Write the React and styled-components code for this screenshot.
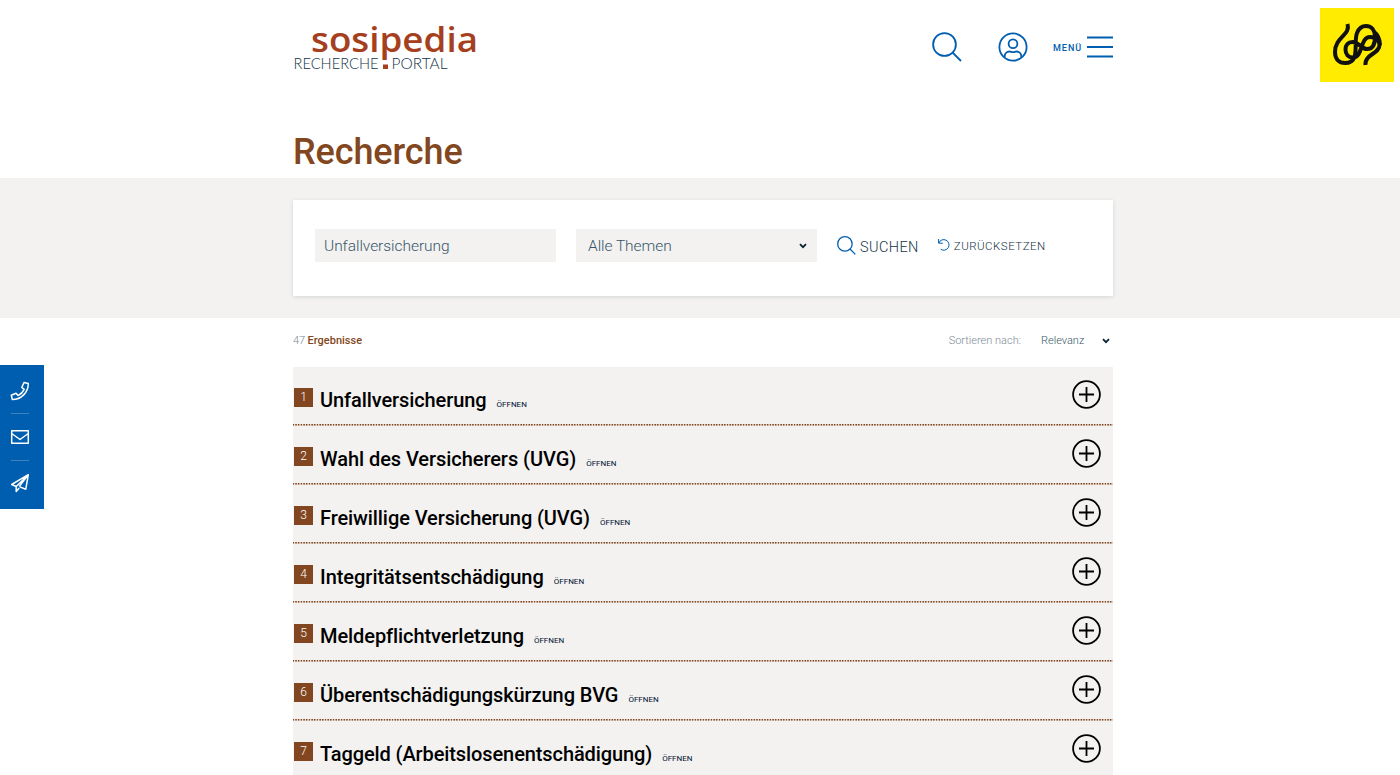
import React from 'react'
import styled, { createGlobalStyle } from 'styled-components'

const GlobalStyle = createGlobalStyle`
  * {
    box-sizing: border-box;
  }
  body {
    margin: 0;
    height: 775px;
    overflow: hidden;
    background: #fff;
    color: #143345;
    font-family: Roboto, 'Liberation Sans', sans-serif;
  }
`

const Page = styled.div`
  height: 775px;
  overflow: hidden;
`

const Container = styled.div`
  width: 820px;
  margin-left: 293px;
`

const Header = styled.header`
  display: flex;
  justify-content: space-between;
  height: 130px;
  padding-top: 16px;
`

const Logo = styled.svg`
  display: block;
  width: 190px;
  height: 62px;
  overflow: visible;
`

const Nav = styled.nav`
  display: flex;
  align-items: center;
  height: 61px;
  color: #005eb0;
  svg {
    display: block;
    fill: none;
    stroke: currentColor;
  }
`

const NavItem = styled.a`
  display: flex;
  margin-left: ${({ $gap }) => $gap}px;
`

const MenuLabel = styled.span`
  margin: 2px 0 0 25px;
  width: 34px;
  font-size: 9px;
  font-weight: 500;
  letter-spacing: 1px;
`

const Title = styled.h1`
  margin: 0;
  height: 47.5px;
  font-size: 36px;
  line-height: 44px;
  font-weight: 500;
  letter-spacing: -0.1px;
  color: #824720;
`

const SearchBand = styled.section`
  height: 140.5px;
  padding-top: 22px;
  background: #f3f2f0;
`

const SearchForm = styled.div`
  display: flex;
  align-items: center;
  width: 820px;
  height: 96px;
  margin-left: 293px;
  padding: 0 22px 5px;
  background: #fff;
  box-shadow: 0 1px 4px rgba(20, 51, 69, 0.14);
`

const Field = styled.div`
  display: flex;
  align-items: center;
  justify-content: space-between;
  width: 241px;
  height: 33px;
  margin-right: 20px;
  padding: 1px 10px 0 ${({ $indent }) => $indent}px;
  background: #f3f2f0;
  font-size: 15.5px;
  font-weight: 300;
  letter-spacing: -0.05px;
  color: #36566a;
`

const FormButton = styled.a`
  display: flex;
  align-items: center;
  margin-right: 19px;
  font-size: ${({ $size }) => $size}px;
  font-weight: 300;
  letter-spacing: ${({ $spacing }) => $spacing}px;
  white-space: nowrap;
  svg {
    display: block;
    flex: none;
    fill: none;
    stroke: #005eb0;
  }
`

const ButtonText = styled.span`
  margin: ${({ $top }) => $top}px 0 0 4px;
`

const Meta = styled.div`
  display: flex;
  align-items: center;
  height: 49px;
  padding-bottom: 4px;
  font-size: 11px;
  font-weight: 300;
  color: #7c8a94;
`

const Count = styled.div`
  flex: 1;
  letter-spacing: -0.1px;
  strong {
    font-weight: 500;
    letter-spacing: 0;
    color: #824720;
  }
`

const SortValue = styled.span`
  display: flex;
  align-items: center;
  justify-content: space-between;
  width: 69px;
  margin: 0 3px 0 20px;
  color: #36566a;
`

const Row = styled.article`
  display: flex;
  height: 58.93px;
  padding: 0 12px 0 1px;
  background:
    repeating-linear-gradient(90deg, #824720 0, #824720 0.7px, #e3d8d0 1.4px, #e3d8d0 2px, #824720 2.68px) 0 100% / 100% 1.6px no-repeat,
    #f3f2f0;
`

const Badge = styled.span`
  width: 19px;
  height: 19px;
  margin: 21px 7px 0 0;
  background: #824720;
  color: #fff;
  font-size: 12px;
  font-weight: 300;
  line-height: 19px;
  text-align: center;
`

const RowTitle = styled.h2`
  margin: 0;
  font-size: 20px;
  line-height: 66px;
  font-weight: 500;
  letter-spacing: ${({ $spacing }) => $spacing}px;
  color: #000;
  white-space: nowrap;
`

const Open = styled.span`
  flex: 1;
  margin-left: 10px;
  font-size: 8px;
  line-height: 76px;
  color: #001030;
`

const Plus = styled.svg`
  width: 29px;
  height: 29px;
  margin-top: 13px;
  fill: none;
  stroke: #000;
  stroke-width: 1.8;
`

const Partner = styled.div`
  position: absolute;
  top: 8px;
  left: 1320px;
  width: 74px;
  height: 74px;
  background: #ffec00;
`

const ContactBar = styled.aside`
  position: absolute;
  top: 365px;
  left: 0;
  display: flex;
  flex-direction: column;
  align-items: center;
  width: 43.5px;
  height: 144px;
  padding: 3px 4px 3px 0;
  background: #005eb0;
`

const Contact = styled.a`
  display: flex;
  flex: 1;
  align-items: center;
  justify-content: center;
  width: 18px;
  & + & {
    border-top: 1px solid #3e83c0;
  }
  svg {
    flex: none;
    width: 20px;
    height: 20px;
    fill: none;
    stroke: #fff;
    stroke-width: 1.5;
    stroke-linejoin: round;
  }
`

const Magnifier = ({ size, width }) => (
  <svg width={size} height={size} viewBox="0 0 30 30" strokeWidth={width}>
    <circle cx="12.5" cy="12.5" r="11.4" />
    <path d="M20.5 20.5 29 29" />
  </svg>
)

const Chevron = () => (
  <svg width="8" height="6" viewBox="0 0 8 6" fill="none" stroke="#0b2233" strokeWidth="1.8">
    <path d="M1 1.2 4 4.2 7 1.2" />
  </svg>
)

const results = [
  { title: 'Unfallversicherung', spacing: -0.09 },
  { title: 'Wahl des Versicherers (UVG)', spacing: -0.06 },
  { title: 'Freiwillige Versicherung (UVG)', spacing: -0.09 },
  { title: 'Integritätsentschädigung', spacing: -0.03 },
  { title: 'Meldepflichtverletzung', spacing: -0.08 },
  { title: 'Überentschädigungskürzung BVG', spacing: -0.08 },
  { title: 'Taggeld (Arbeitslosenentschädigung)', spacing: -0.1 },
]

const ResultRow = ({ number, title, spacing }) => (
  <Row>
    <Badge>{number}</Badge>
    <RowTitle $spacing={spacing}>{title}</RowTitle>
    <Open>ÖFFNEN</Open>
    <Plus viewBox="0 0 29 29">
      <circle cx="14.5" cy="14.5" r="13.4" />
      <path d="M7 14.5h15M14.5 7v15" />
    </Plus>
  </Row>
)

const App = () => (
  <Page>
    <GlobalStyle />
    <Container>
      <Header>
        <Logo viewBox="0 0 190 62">
          <text x="18" y="36" textLength="167" lengthAdjust="spacingAndGlyphs" fill="#a53f1e" fontFamily="Open Sans" fontSize="35" fontWeight="650">sosipedia</text>
          <text x="0.5" y="53" textLength="85" lengthAdjust="spacingAndGlyphs" fill="#143345" fontFamily="Lato" fontSize="15" fontWeight="300">RECHERCHE</text>
          <text x="98.5" y="53" textLength="56" lengthAdjust="spacingAndGlyphs" fill="#143345" fontFamily="Lato" fontSize="15" fontWeight="300">PORTAL</text>
          <path d="M90 48.500h5v4.500h-5z" fill="#a53f1e" />
        </Logo>
        <Nav>
          <NavItem $gap={0}><Magnifier size={30} width={1.8} /></NavItem>
          <NavItem $gap={36}>
            <svg width="30" height="30" viewBox="0 0 30 30" strokeWidth="1.8">
              <circle cx="15" cy="15" r="13.6" />
              <circle cx="15" cy="11.7" r="4.4" />
              <path d="M6.7 25.5v-1.2a4.8 4.8 0 0 1 4.8-4.8c1.4 0 2 .7 3.500.7s2.100-.7 3.500-.7a4.800 4.800 0 0 1 4.800 4.800v1.200" />
            </svg>
          </NavItem>
          <MenuLabel>MENÜ</MenuLabel>
          <svg width="26" height="22" viewBox="0 0 26 22" strokeWidth="2">
            <path d="M0 1.500h26M0 11h26M0 20.500h26" />
          </svg>
        </Nav>
      </Header>
      <Title>Recherche</Title>
    </Container>
    <SearchBand>
      <SearchForm>
        <Field $indent={9}>Unfallversicherung</Field>
        <Field $indent={12}>Alle Themen<Chevron /></Field>
        <FormButton $size={14.5} $spacing={0.4}>
          <Magnifier size={19} width={2} />
          <ButtonText $top={5}>SUCHEN</ButtonText>
        </FormButton>
        <FormButton $size={11.5} $spacing={0.5}>
          <svg width="12" height="12" viewBox="0 0 12 12">
            <path d="M.6 0v4.200h4.200M.8 4A5.300 5.300 0 1 1 2.600 10.200" />
          </svg>
          <ButtonText $top={2}>ZURÜCKSETZEN</ButtonText>
        </FormButton>
      </SearchForm>
    </SearchBand>
    <Container>
      <Meta>
        <Count>47 <strong>Ergebnisse</strong></Count>
        <span>Sortieren nach:</span>
        <SortValue>Relevanz<Chevron /></SortValue>
      </Meta>
      {results.map((result, index) => (
        <ResultRow key={result.title} number={index + 1} {...result} />
      ))}
    </Container>
    <Partner>
      <svg width="74" height="74" viewBox="0 0 74 74" fill="none" stroke="#111" strokeWidth="4">
        <path d="M27.500 16C31 27 15 29 15 44C15 51 19 55 25 55C41 55 33 35 37 25C39 20 42 18 46 18C52 18 55 23 55 29C55 37 52 41 47 41C41 41 39 34 32.500 34C28 34 25.500 37 25.500 41.500C25.500 46 28 49.500 33 49.500C43 49.500 40 29 50 29C56 29 59.500 33 59.500 37C59.500 46 44.500 46 45.500 57" />
        <path d="M54 24C57 26 60 31 60 37" />
      </svg>
    </Partner>
    <ContactBar>
      <Contact>
        <svg viewBox="0 0 20 20"><path d="m14 1.500 4.300 1c0 9-7 16-16 16l-1-4.300 4.700-2 2 2.400c2.800-1.300 4.900-3.400 6.200-6.200l-2.400-2z" /></svg>
      </Contact>
      <Contact>
        <svg viewBox="0 0 20 20"><path d="M1.700 3.700h16.600v12.600H1.700zM1.700 6.500 10 12.500l8.300-6" /></svg>
      </Contact>
      <Contact>
        <svg viewBox="0 0 20 20"><path d="M18.300 1.700 1.700 11.500l4.500 2L18.300 1.700l-2.500 14.500-6-2.300M6.200 13.500v5l3-3.500M9.200 13.500l9-11.700" /></svg>
      </Contact>
    </ContactBar>
  </Page>
)

export default App
